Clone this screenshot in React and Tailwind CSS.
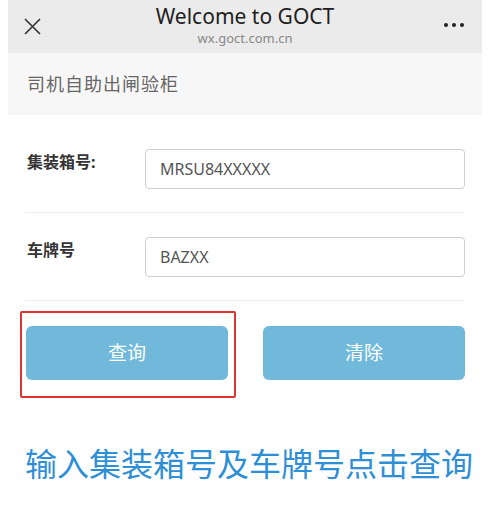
const font = { fontFamily: '"Noto Sans", "Noto Sans CJK SC", sans-serif' };

const FieldRow = ({ label, value, top }) => (
  <div className={`flex items-start pb-[23px] border-b border-[#ececec] ${top}`}>
    <div className="w-[120px] pl-[2px] pt-[1px] text-[16px] font-bold text-[#333]">{label}</div>
    <div className="flex-1 h-[40px] border border-[#cfcfcf] rounded-[4px] flex items-center px-[14px] text-[16px] text-[#555]">
      {value}
    </div>
  </div>
);

export default function App() {
  return (
    <div className="w-[489px] h-[518px] bg-white pl-[8px] pr-[7px]" style={font}>
      <div className="h-[53px] bg-[#ebebeb] relative flex flex-col items-center pt-[3px]">
        <svg className="absolute left-[16px] top-[18px]" width="17" height="17" viewBox="0 0 17 17">
          <path d="M1 1 L16 16 M16 1 L1 16" stroke="#333" strokeWidth="1.6" />
        </svg>
        <div className="text-[21px] leading-[27px] text-[#222]">Welcome to GOCT</div>
        <div className="text-[13px] leading-[16px] text-[#888]">wx.goct.com.cn</div>
        <div className="absolute right-[18px] top-[23px] flex gap-[4px]">
          <span className="w-[4px] h-[4px] rounded-full bg-[#222]" />
          <span className="w-[4px] h-[4px] rounded-full bg-[#222]" />
          <span className="w-[4px] h-[4px] rounded-full bg-[#222]" />
        </div>
      </div>

      <div className="h-[62px] bg-[#f7f7f7] flex items-center pl-[19px] text-[18px] text-[#666] tracking-[1px]">
        司机自助出闸验柜
      </div>

      <div className="pl-[17px] pr-[17px]">
        <FieldRow label="集装箱号:" value="MRSU84XXXXX" top="pt-[34px]" />
        <FieldRow label="车牌号" value="BAZXX" top="pt-[24px]" />

        <div className="flex justify-between pl-[1px] mt-[25px] relative">
          <div className="absolute left-[-5px] top-[-15px] w-[216px] h-[87px] border-2 border-[#dd3430] rounded-[2px]" />
          <button className="w-[202px] h-[54px] rounded-[6px] bg-[#70b9da] text-white text-[19px]">查询</button>
          <button className="w-[202px] h-[54px] rounded-[6px] bg-[#70b9da] text-white text-[19px]">清除</button>
        </div>

        <div className="mt-[64px] text-[32px] leading-[40px] text-[#2f8fd6] whitespace-nowrap">
          输入集装箱号及车牌号点击查询
        </div>
      </div>
    </div>
  );
}
